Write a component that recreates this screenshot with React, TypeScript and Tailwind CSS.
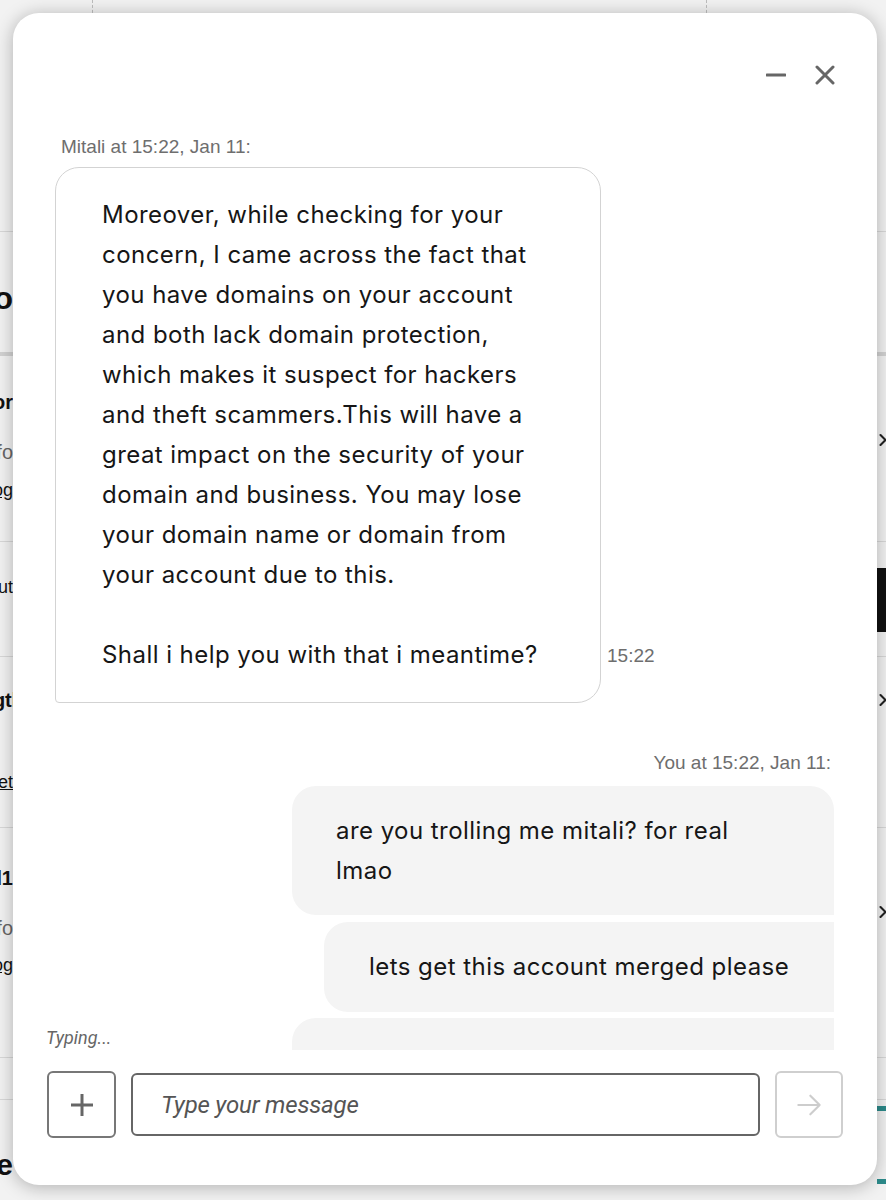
import React from 'react';

const bubbleFont = { fontFamily: 'Inter, "Noto Sans", sans-serif' };

function Chevron() {
  return (
    <svg width="20" height="20" viewBox="0 0 24 24" fill="none" stroke="#222" strokeWidth="2.5" strokeLinecap="round" strokeLinejoin="round">
      <path d="m9 6 6 6-6 6" />
    </svg>
  );
}

// page that sits behind the chat window; only its edges show
function Backdrop() {
  return (
    <div className="flex h-[1200px] flex-col bg-[#f2f2f2] font-['Liberation_Sans',Arial,sans-serif] text-[#111]">
      <div className="grid h-[232px] shrink-0 grid-cols-[93px_614px_1fr] border-b border-[#d8d8d8]">
        <div className="border-r border-dashed border-[#bdbdbd]" />
        <div className="border-r border-dashed border-[#bdbdbd]" />
        <div />
      </div>

      <div className="flex h-[124px] shrink-0 justify-between border-b-4 border-[#d2d2d2]">
        <div className="flex w-[13px] justify-end overflow-hidden whitespace-nowrap">
          <span className="mt-[48px] text-[32px] font-bold leading-[36px]">Info</span>
        </div>
        <div className="w-[9px]" />
      </div>

      <div className="flex h-[186px] shrink-0 justify-between border-b border-[#d8d8d8]">
        <div className="flex w-[13px] flex-col items-end overflow-hidden whitespace-nowrap">
          <span className="mt-[34px] text-[20px] font-bold leading-[24px]">Vendor</span>
          <span className="mt-[26px] text-[20px] leading-[24px] text-[#666]">Info</span>
          <span className="mt-[14px] text-[18px] leading-[24px] underline">Blog</span>
        </div>
        <div className="w-[9px] overflow-hidden">
          <div className="mt-[74px] ml-[-4px]"><Chevron /></div>
        </div>
      </div>

      <div className="flex h-[115px] shrink-0 justify-between border-b border-[#d8d8d8]">
        <div className="flex w-[13px] justify-end overflow-hidden whitespace-nowrap">
          <span className="mt-[33px] text-[18px] leading-[24px]">About</span>
        </div>
        <div className="w-[9px] overflow-hidden">
          <div className="mt-[26px] h-[64px] w-[9px] bg-[#111]" />
        </div>
      </div>

      <div className="flex h-[171px] shrink-0 justify-between border-b border-[#d8d8d8]">
        <div className="flex w-[13px] flex-col items-end overflow-hidden whitespace-nowrap">
          <span className="mr-[-11px] mt-[31px] text-[20px] font-bold leading-[24px]">Length</span>
          <span className="mt-[58px] text-[18px] leading-[24px] underline">Set</span>
        </div>
        <div className="w-[9px] overflow-hidden">
          <div className="mt-[33px] ml-[-4px]"><Chevron /></div>
        </div>
      </div>

      <div className="flex h-[230px] shrink-0 justify-between border-b border-[#d8d8d8]">
        <div className="flex w-[13px] flex-col items-end overflow-hidden whitespace-nowrap">
          <span className="mt-[38px] text-[20px] font-bold leading-[24px]">Id1</span>
          <span className="mt-[26px] text-[20px] leading-[24px] text-[#666]">Info</span>
          <span className="mt-[13px] text-[18px] leading-[24px] underline">Blog</span>
        </div>
        <div className="w-[9px] overflow-hidden">
          <div className="mt-[74px] ml-[-4px]"><Chevron /></div>
        </div>
      </div>

      <div className="h-[42px] shrink-0 border-b border-[#d8d8d8]" />

      <div className="flex flex-1 justify-between">
        <div className="flex w-[13px] justify-end overflow-hidden whitespace-nowrap">
          <span className="mt-[47px] text-[30px] font-bold leading-[36px]">Home</span>
        </div>
        <div className="flex w-[9px] flex-col justify-between pt-[6px] pb-[16px]">
          <div className="h-[5px] bg-[#2c8a8a]" />
          <div className="h-[5px] bg-[#2c8a8a]" />
        </div>
      </div>
    </div>
  );
}

export default function App() {
  return (
    <div className="relative h-[1200px] w-[886px] overflow-hidden">
      <Backdrop />

      {/* chat window */}
      <div className="absolute left-[13px] top-[13px] flex h-[1172px] w-[864px] flex-col overflow-hidden rounded-[26px] bg-white shadow-[0_2px_18px_rgba(0,0,0,0.28)]">
        <div className="flex h-[124px] shrink-0 items-center justify-end gap-[29px] pr-[42px]">
          <button aria-label="Minimize" className="flex h-[20px] w-[20px] items-center">
            <svg width="20" height="20" viewBox="0 0 20 20">
              <path d="M1 10h18" stroke="#666" strokeWidth="3" strokeLinecap="round" />
            </svg>
          </button>
          <button aria-label="Close" className="flex h-[20px] w-[20px] items-center">
            <svg width="20" height="20" viewBox="0 0 20 20">
              <path d="M2 2l16 16M18 2 2 18" stroke="#666" strokeWidth="3" strokeLinecap="round" />
            </svg>
          </button>
        </div>

        <div className="relative h-[913px] shrink-0">
          <div className="flex h-full flex-col overflow-hidden pl-[42px] pr-[43px]">
            <p className="ml-[6px] font-['Liberation_Sans',Arial,sans-serif] text-[19px] leading-[20px] text-[#6e6e6e]">
              Mitali at 15:22, Jan 11:
            </p>
            <div className="mt-[10px] flex items-end gap-[6px]">
              <div
                className="w-[546px] shrink-0 whitespace-nowrap rounded-[24px] rounded-bl-[4px] border border-[#d3d3d3] px-[46px] py-[27px] text-[24px] leading-[40px] tracking-[0.45px] text-[#161616]"
                style={bubbleFont}
              >
                Moreover, while checking for your<br />
                concern, I came across the fact that<br />
                you have domains on your account<br />
                and both lack domain protection,<br />
                which makes it suspect for hackers<br />
                and theft scammers.This will have a<br />
                great impact on the security of your<br />
                domain and business. You may lose<br />
                your domain name or domain from<br />
                your account due to this.<br />
                <br />
                Shall i help you with that i meantime?
              </div>
              <span className="pb-[37px] font-['Liberation_Sans',Arial,sans-serif] text-[19px] leading-[20px] text-[#6e6e6e]">
                15:22
              </span>
            </div>

            <p className="mt-[50px] pr-[3px] text-right font-['Liberation_Sans',Arial,sans-serif] text-[19px] leading-[20px] text-[#6e6e6e]">
              You at 15:22, Jan 11:
            </p>
            <div className="mt-[13px] flex flex-col items-end gap-[7px] whitespace-nowrap text-[24px] leading-[40px] tracking-[0.45px] text-[#161616]" style={bubbleFont}>
              <div className="w-[542px] rounded-[24px] rounded-br-none bg-[#f4f4f4] pt-[25px] pb-[24px] pl-[44px] pr-[40px]">
                are you trolling me mitali? for real<br />
                lmao
              </div>
              <div className="w-[510px] rounded-l-[24px] bg-[#f4f4f4] py-[25px] pl-[45px] pr-[30px]">
                lets get this account merged please
              </div>
              <div className="-mt-px h-[80px] w-[542px] shrink-0 rounded-tl-[24px] bg-[#f4f4f4]" />
            </div>
          </div>
          <p className="absolute bottom-[2px] left-[33px] font-['Roboto',sans-serif] text-[18px] italic leading-[20px] text-[#666]">
            Typing...
          </p>
        </div>

        <div className="flex shrink-0 items-center gap-[15px] px-[34px] pt-[21px]">
          <button aria-label="Add attachment" className="flex h-[67px] w-[69px] shrink-0 items-center justify-center rounded-[6px] border-2 border-[#777]">
            <svg width="26" height="26" viewBox="0 0 26 26">
              <path d="M13 2v22M2 13h22" stroke="#666" strokeWidth="3" />
            </svg>
          </button>
          <div className="flex h-[63px] flex-1 items-center rounded-[6px] border-2 border-[#666] px-[28px]">
            <span className="font-['Roboto',sans-serif] text-[24px] italic tracking-[-0.2px] text-[#555]">Type your message</span>
          </div>
          <button aria-label="Send" className="flex h-[67px] w-[68px] shrink-0 items-center justify-center rounded-[6px] border-2 border-[#cfcfcf]">
            <svg width="32" height="32" viewBox="0 0 24 24" fill="none" stroke="#cdcdcd" strokeWidth="1.6" strokeLinecap="round" strokeLinejoin="round">
              <path d="M4 12h16M13 5l7 7-7 7" />
            </svg>
          </button>
        </div>
      </div>
    </div>
  );
}
